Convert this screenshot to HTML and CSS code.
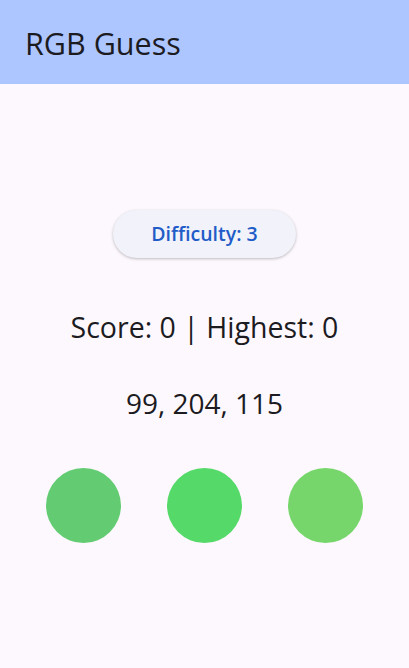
FILE: index.html
```html
<!DOCTYPE html>
<html>
<head>
<meta charset="utf-8">
<link rel="stylesheet" href="styles.css">
</head>
<body>
<header class="appbar"><h1 class="title">RGB Guess</h1></header>
<main class="content">
  <button class="difficulty">Difficulty: 3</button>
  <p class="score">Score: 0 | Highest: 0</p>
  <p class="rgb">99, 204, 115</p>
  <div class="choices">
    <span class="dot dot-a"></span>
    <span class="dot dot-b"></span>
    <span class="dot dot-c"></span>
  </div>
</main>
</body>
</html>
```
FILE: styles.css
```css
html, body {
  margin: 0;
  padding: 0;
}
body {
  width: 409px;
  height: 668px;
  background: #fdf8fd;
  font-family: "Open Sans", "Noto Sans", sans-serif;
  color: #1c1b1f;
  display: flex;
  flex-direction: column;
}
.appbar {
  box-sizing: border-box;
  height: 84px;
  background: #adc6ff;
  display: flex;
  align-items: center;
  padding: 2px 0 0 25px;
  flex-shrink: 0;
}
.title {
  margin: 0;
  font-size: 30.5px;
  font-weight: 400;
  line-height: 1;
  color: #1c1b1f;
}
.content {
  flex: 1;
  display: flex;
  flex-direction: column;
  align-items: center;
  justify-content: center;
}
.difficulty {
  width: 183px;
  height: 48px;
  border: none;
  border-radius: 24px;
  background: #f1f2fa;
  box-shadow: 0 1px 3px rgba(0,0,0,0.25);
  color: #1f5cc8;
  font-family: inherit;
  font-size: 19.5px;
  font-weight: 600;
  padding: 0;
}
.score {
  margin: 49px 0 0;
  font-size: 28.5px;
  line-height: 40px;
}
.rgb {
  margin: 36px 0 0;
  font-size: 28px;
  line-height: 40px;
}
.choices {
  margin-top: 45px;
  width: 100%;
  display: flex;
  justify-content: space-evenly;
}
.dot {
  width: 75px;
  height: 75px;
  border-radius: 50%;
}
.dot-a { background: #63cc73; }
.dot-b { background: #55d968; }
.dot-c { background: #77d66b; }
```
